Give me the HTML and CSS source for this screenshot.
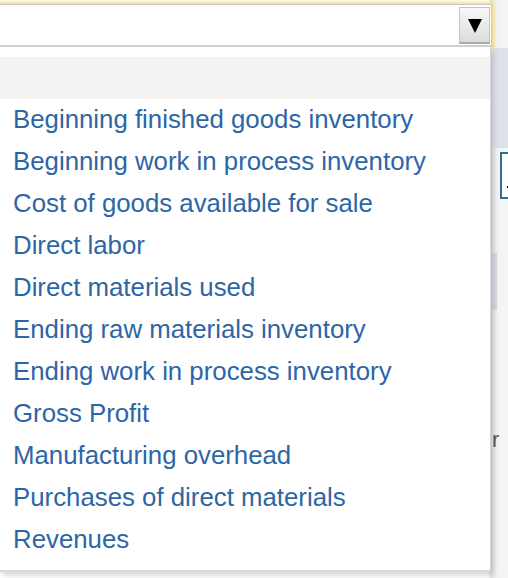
FILE: index.html
```html
<!DOCTYPE html>
<html lang="en">
<head>
    <meta charset="UTF-8">
    <meta name="viewport" content="width=device-width, initial-scale=1.0">
    <title>Select line item</title>
    <link rel="stylesheet" href="styles.css">
</head>
<body>
    <div class="stage">
        <!-- page content behind the open list -->
        <div class="backdrop">
            <div class="band"></div>
            <div class="side">
                <div class="answer-box"><span class="dot"></span></div>
                <div class="side-bar"></div>
                <div class="side-text">r</div>
            </div>
        </div>

        <div class="combo">
            <div class="select-box">
                <span class="select-value"></span>
                <span class="select-button"><span class="arrow"></span></span>
            </div>
            <ul class="option-list">
                <li class="option blank"></li>
                <li class="option">Beginning finished goods inventory</li>
                <li class="option">Beginning work in process inventory</li>
                <li class="option">Cost of goods available for sale</li>
                <li class="option">Direct labor</li>
                <li class="option">Direct materials used</li>
                <li class="option">Ending raw materials inventory</li>
                <li class="option">Ending work in process inventory</li>
                <li class="option">Gross Profit</li>
                <li class="option">Manufacturing overhead</li>
                <li class="option">Purchases of direct materials</li>
                <li class="option">Revenues</li>
            </ul>
        </div>
    </div>
</body>
</html>
```

FILE: styles.css
```css
html, body {
    margin: 0;
    padding: 0;
}

body {
    font-family: "Liberation Sans", Arial, sans-serif;
    background-color: #f2f2f2;
    overflow: hidden;
}

.stage {
    display: grid;
    width: 508px;
    height: 578px;
}

.stage > * {
    grid-area: 1 / 1;
}

/* behind the list */
.backdrop {
    display: flex;
    flex-direction: column;
    background: linear-gradient(to right, #ffffff 0, #ffffff 488px, #e2e2e2 491px, #f3f3f3 497px, #f6f6f6 508px);
}

.band {
    height: 100px;
    margin-top: 48px;
    background-color: #dde2ea;
}

.side {
    display: flex;
    flex-direction: column;
    padding-left: 492px;
}

.answer-box {
    width: 20px;
    height: 43px;
    margin: 4px 0 0 8px;
    border: 2px solid #2f6f92;
    background-color: #ffffff;
    position: relative;
}

.dot {
    position: absolute;
    left: 5px;
    top: 32px;
    width: 2px;
    height: 2px;
    background-color: #000;
}

.side-bar {
    width: 5px;
    height: 57px;
    margin-top: 54px;
    background-color: #d4dae3;
}

.side-text {
    margin-top: 118px;
    font-size: 22px;
    color: #555555;
    line-height: 24px;
}

/* the open select */
.combo {
    display: flex;
    flex-direction: column;
    width: 495px;
    z-index: 1;
}

.select-box {
    display: flex;
    align-items: center;
    justify-content: space-between;
    height: 38px;
    margin: 4px 3px 0 -4px;
    padding: 2px 1px 0 0;
    background-color: #ffffff;
    border: 1px solid #c9c9c9;
    border-bottom: 2px solid #d2d2d2;
    box-shadow: 0 0 3px 2px #f7e07a;
}

.select-button {
    display: flex;
    align-items: center;
    justify-content: center;
    width: 29px;
    height: 34px;
    margin-top: -1px;
    border: 1px solid #c4c4c4;
    border-bottom: 2px solid #a9a9a9;
    background: linear-gradient(#f7f7f7, #dcdcdc);
}

.arrow {
    width: 0;
    height: 0;
    margin-top: 1px;
    border-left: 7px solid transparent;
    border-right: 7px solid transparent;
    border-top: 14px solid #000;
}

.option-list {
    list-style: none;
    margin: 0;
    padding: 10px 0 9px;
    width: 490px;
    background-color: #ffffff;
    border-right: 1px solid #d4d4d4;
    border-bottom: 2px solid #d9d9d9;
    box-shadow: 2px 3px 6px rgba(0, 0, 0, 0.18);
}

.option {
    height: 42px;
    line-height: 40px;
    padding-left: 13px;
    font-size: 25.8px;
    color: #2d66a6;
    white-space: nowrap;
}

.option.blank {
    background-color: #f3f3f3;
}
```
